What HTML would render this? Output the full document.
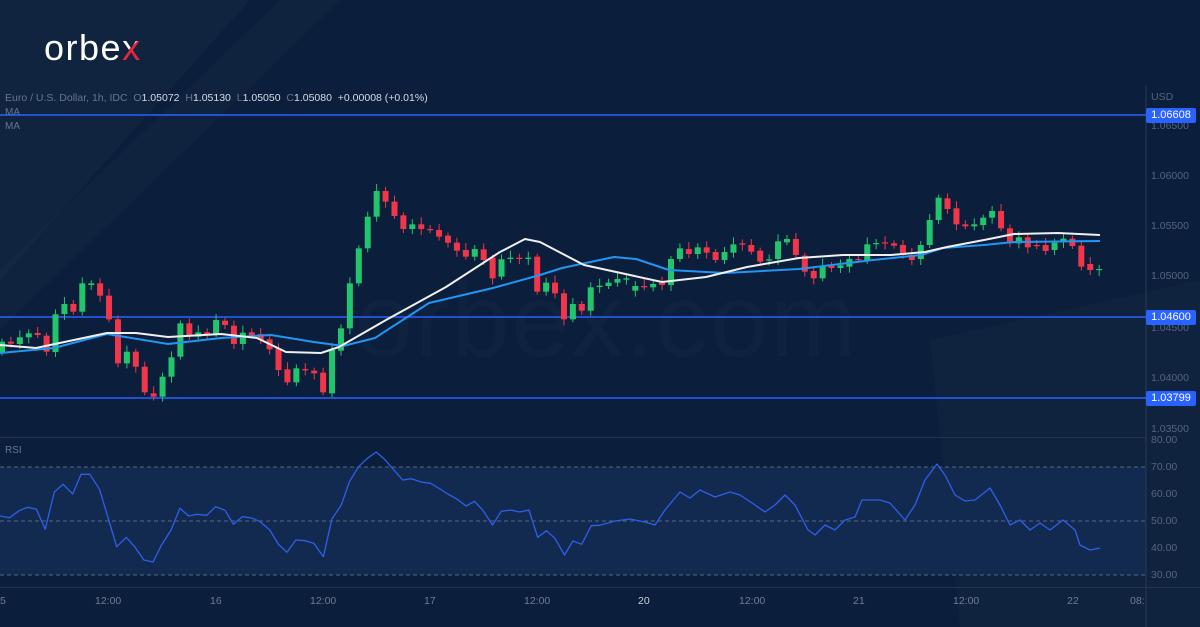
<!DOCTYPE html>
<html><head><meta charset="utf-8"><style>
html,body{margin:0;padding:0;background:#0b1e3b;}
#w{position:relative;width:1200px;height:627px;overflow:hidden;background:#0b1e3b;font-family:"Liberation Sans",sans-serif;}
svg{position:absolute;left:0;top:0}
.logo{position:absolute;left:44px;top:27px;font-size:36px;color:#fff;letter-spacing:1.5px;font-family:"Liberation Sans",sans-serif}
.logo span{background:linear-gradient(135deg,#fff 0 48%,#e6283b 48% 100%);-webkit-background-clip:text;background-clip:text;color:transparent}
.hdr{position:absolute;left:5px;top:92px;font-size:10.5px;color:#66768f;white-space:nowrap}
.hdr b{font-weight:normal;color:#d6dbe6}
.ma{position:absolute;left:5px;font-size:10px;color:#66768f}
.ax{position:absolute;left:1151px;font-size:10.5px;color:#56657c}
.tag{position:absolute;left:1146px;width:50px;height:15px;background:#2962ff;color:#fff;font-size:11px;line-height:15px;text-align:center;border-radius:2px}
.t{position:absolute;top:595px;font-size:10.5px;color:#6f7d93}
.wm{position:absolute;left:355px;top:262px;font-size:104px;color:rgba(120,140,170,0.045);letter-spacing:2px}
</style></head><body><div id="w">
<svg width="1200" height="627" id="bg">
<polygon points="0,0 250,0 0,280" fill="rgba(255,255,255,0.025)"/>
<polygon points="280,0 340,0 0,330 0,270" fill="rgba(255,255,255,0.02)"/>
<polygon points="930,340 1200,280 1200,627 960,627" fill="rgba(255,255,255,0.018)"/>
<rect x="0" y="467" width="1146" height="108" fill="#132a50"/>
</svg>
<div class="wm">orbex.com</div>
<svg width="1200" height="627" id="ch"></svg>
<div class="logo">orbe<span>x</span></div>
<div class="hdr">Euro / U.S. Dollar, 1h, IDC &nbsp;O<b>1.05072</b> &nbsp;H<b>1.05130</b> &nbsp;L<b>1.05050</b> &nbsp;C<b>1.05080</b> &nbsp;<b>+0.00008 (+0.01%)</b></div>
<div class="ma" style="top:107px">MA</div>
<div class="ma" style="top:121px">MA</div>
<div class="ma" style="top:445px">RSI</div>
<div class="ax" style="top:91px">USD</div>
<div class="ax" style="top:120px">1.06500</div>
<div class="ax" style="top:170px">1.06000</div>
<div class="ax" style="top:220px">1.05500</div>
<div class="ax" style="top:270px">1.05000</div>
<div class="ax" style="top:322px">1.04500</div>
<div class="ax" style="top:372px">1.04000</div>
<div class="ax" style="top:423px">1.03500</div>
<div class="tag" style="top:108px">1.06608</div>
<div class="tag" style="top:310px">1.04600</div>
<div class="tag" style="top:391px">1.03799</div>
<div class="ax" style="top:434px">80.00</div>
<div class="ax" style="top:461px">70.00</div>
<div class="ax" style="top:488px">60.00</div>
<div class="ax" style="top:515px">50.00</div>
<div class="ax" style="top:542px">40.00</div>
<div class="ax" style="top:569px">30.00</div>
<div class="t" style="left:0">5</div>
<div class="t" style="left:95px">12:00</div>
<div class="t" style="left:210px">16</div>
<div class="t" style="left:310px">12:00</div>
<div class="t" style="left:424px">17</div>
<div class="t" style="left:524px">12:00</div>
<div class="t" style="left:638px;color:#c8d0dc">20</div>
<div class="t" style="left:739px">12:00</div>
<div class="t" style="left:853px">21</div>
<div class="t" style="left:953px">12:00</div>
<div class="t" style="left:1067px">22</div>
<div class="t" style="left:1130px">08:</div>
<script>
var A=[["g",545,578],["r",545,551],["g",532,552],["g",520,532],["r",519,525],["r",527,575],["g",463,576],["g",432,462],["r",432,455],["g",370,455],["g",370,375],["r",370,407],["r",407,478],["r",478,610],["g",575,610],["r",575,620],["r",620,697],["r",700,710],["g",650,710],["g",592,650],["g",490,590],["r",490,528],["g",517,530],["r",517,522],["g",480,522],["r",482,495],["r",497,552],["g",518,552],["r",517,527],["r",522,540],["r",538,568],["r",565,630],["r",628,667],["g",625,667],["r",627,631],["r",632,640],["r",638,697],["g",570,700],["g",505,572],["g",370,505],["g",265,370],["g",170,265],["g",93,170],["r",93,125],["r",125,168],["r",166,207],["g",193,207],["r",193,207],["r",207,210],["r",210,230],["r",227,248],["r",248,272],["r",270,290],["g",267,290],["r",268,300],["r",293,355],["g",298,350],["g",293,297],["r",293,297],["g",293,297],["r",290,395],["g",368,395],["r",368,400]];
var B=[["r",340,418],["g",372,418],["r",372,392],["g",322,392],["g",317,321],["g",308,318],["g",297,308],["g",295,299],["g",318,332],["r",318,322],["g",312,322],["r",308,315],["g",237,315],["g",205,237],["r",207,222],["g",202,222],["r",202,218],["r",216,240],["g",216,240],["g",193,218],["r",190,194],["r",195,215],["r",212,245],["g",238,242],["g",184,237],["g",177,187],["r",177,225],["r",227,275],["r",273,295],["g",257,295],["r",258,264],["g",256,264],["g",237,260],["r",237,240],["g",193,240],["g",189,192],["r",187,190],["r",190,197],["r",195,225],["r",225,240],["g",195,237],["g",120,195],["g",53,120],["r",55,87],["r",85,133],["r",133,139],["g",133,139],["g",113,135],["g",93,113],["r",93,145],["r",145,190],["g",172,190],["r",172,202],["r",195,198],["r",195,213],["g",188,210],["g",176,186],["r",176,198],["r",197,260],["r",252,270],["g",267,270]];
var s='';
s+='<line x1="1146" y1="85" x2="1146" y2="627" stroke="#2a3a55" stroke-width="1"/>';
s+='<line x1="0" y1="437.5" x2="1146" y2="437.5" stroke="#24344f"/>';
s+='<line x1="0" y1="587.5" x2="1200" y2="587.5" stroke="#24344f"/>';
[467,521,575].forEach(function(y){s+='<line x1="0" y1="'+y+'" x2="1146" y2="'+y+'" stroke="#55657f" stroke-dasharray="4,3"/>';});
[115,317,398].forEach(function(y){s+='<line x1="0" y1="'+y+'" x2="1146" y2="'+y+'" stroke="#2962ff" stroke-width="1.5"/>';});
function candle(i,c,t,b){var x=2+8.92*i;var col=c=="g"?"#22c56b":"#f2364a";if(b-t<1.2){b=t+1.2}
var wt=t-3-((i*7)%5),wb=b+3+((i*5)%4);
s+='<line x1="'+x+'" y1="'+wt+'" x2="'+x+'" y2="'+wb+'" stroke="'+col+'" stroke-width="1"/>';
s+='<rect x="'+(x-3)+'" y="'+t+'" width="6" height="'+(b-t)+'" fill="'+col+'"/>';}
A.forEach(function(d,i){candle(i,d[0],160+d[1]/3,160+d[2]/3);});
B.forEach(function(d,i){candle(63+i,d[0],180+d[1]/3,180+d[2]/3);});
function pl(p,col,w){s+='<polyline fill="none" stroke="'+col+'" stroke-width="'+w+'" stroke-linejoin="round" points="'+p.map(function(q){return q.join(",")}).join(" ")+'"/>';}
pl([[0,353],[54,348],[107,334],[168,344],[221,338],[271,335],[314,342],[343,346],[375,338],[429,303],[493,288],[540,275],[562,268],[614,257],[636,259],[669,270],[725,273],[799,269],[873,260],[921,255],[943,248],[984,245],[1014,242],[1100,241]],"#2196f3",2);
pl([[0,345],[36,348],[107,333],[136,333],[168,337],[221,334],[257,338],[286,352],[321,353],[339,347],[386,320],[446,287],[500,252],[525,239],[540,242],[584,265],[662,282],[706,277],[747,267],[799,258],[843,255],[891,255],[925,252],[947,247],[984,240],[1014,234],[1058,233],[1100,235]],"#f0f0f0",2);
var r=[[0,258],[25,263],[50,242],[72,232],[95,238],[118,298],[142,186],[165,163],[190,192],[212,133],[235,133],[260,178],[282,262],[305,350],[330,322],[352,350],[376,390],[400,396],[422,345],[447,300],[470,235],[493,258],[515,253],[540,256],[563,230],[588,241],[610,283],[633,260],[658,264],[680,275],[705,300],[727,342],[750,367],[773,330],[797,332],[820,340],[845,380],[867,268],[892,224],[913,155],[937,110],[960,85],[983,66],[1005,88],[1028,118],[1052,150],[1075,146],[1100,156],[1125,160],[1150,177],[1170,192],[1195,208],[1218,228],[1240,214],[1263,243],[1287,285],[1310,244],[1335,240],[1358,246],[1382,240],[1405,322],[1428,302],[1450,325],[1475,375],[1497,333],[1520,343],[1545,287],[1568,286]].map(function(q){return [(q[0]/2.613).toFixed(1),(430+q[1]/3).toFixed(1)]});
r=r.concat([[615,521],[630,519],[645,522],[655,525],[665,510],[680,492],[690,498],[700,490],[715,497],[730,492],[740,495],[755,505],[765,512],[775,505],[785,495],[795,505],[808,530],[815,535],[825,525],[835,530],[845,520],[855,517],[862,500],[880,500],[890,503],[905,520],[915,505],[925,480],[937,464],[945,475],[955,495],[965,501],[975,500],[990,488],[1000,505],[1010,525],[1020,520],[1030,530],[1040,523],[1050,530],[1063,520],[1075,530],[1080,545],[1090,550],[1100,548]]);
pl(r,"#2f5ee8",1.3);
document.getElementById('ch').innerHTML=s;
</script>
</div></body></html>
